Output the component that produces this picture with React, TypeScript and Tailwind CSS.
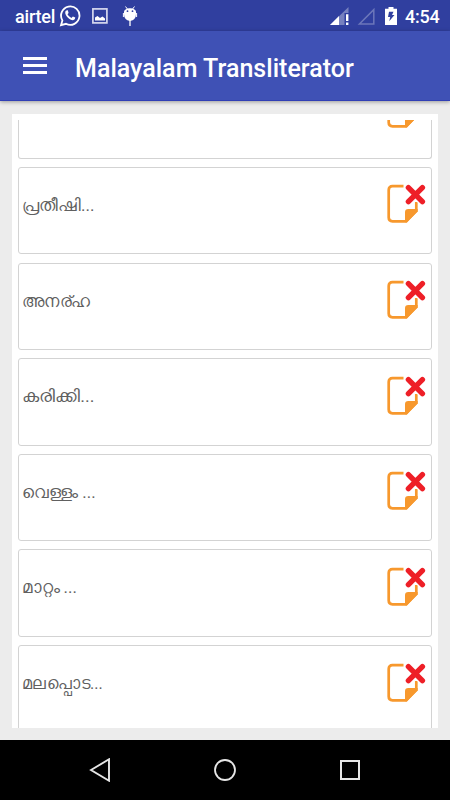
const entries = [
  { text: 'പ്രതീഷി...', fit: '' },
  { text: 'അനര്ഹ', fit: 'scale-x-[0.97]' },
  { text: 'കരിക്കി...', fit: 'scale-x-[1.06]' },
  { text: 'വെള്ളം ...', fit: 'scale-x-[0.985]' },
  { text: 'മാറ്റം ...', fit: 'scale-x-[0.985]' },
  { text: 'മലപ്പൊട...', fit: 'scale-x-[0.945]' },
];

function DeleteNoteIcon() {
  return (
    <svg className="h-10 w-10 shrink-0" viewBox="0 0 40 40" fill="none">
      <path d="M17.5 2.2H6.5Q2.7 2.2 2.7 6V33.6Q2.7 37.4 6.5 37.4H20L30.3 27V18" stroke="#f7982d" strokeWidth="2.7" strokeLinejoin="round" />
      <path d="M19 38V28.2Q19 24.9 22.3 24.9H31.6V27.2L20.8 38.7Z" fill="#f7982d" />
      <path d="M22.4 3.6L36.4 17.6M36.4 3.6L22.4 17.6" stroke="#fff" strokeWidth="8" strokeLinecap="round" />
      <path d="M22.4 3.6L36.4 17.6M36.4 3.6L22.4 17.6" stroke="#ee1f27" strokeWidth="5.4" strokeLinecap="round" />
    </svg>
  );
}

function StatusBar() {
  return (
    <div className="flex h-[31px] shrink-0 items-center bg-[#303f9f] pl-[15px] pr-[10px] text-white">
      <span className="mt-[2px] w-[40px] whitespace-nowrap text-[18px] font-medium leading-none tracking-[-0.2px]">airtel</span>
      <svg className="ml-[4px] h-[24px] w-[22px]" viewBox="0 0 22 24" fill="none">
        <path d="M2 21.2L3.4 16.4A9.2 9.2 0 1 1 7 19.8Z" stroke="white" strokeWidth="1.8" />
        <path d="M8 6.2Q6 6.5 6.2 9C6.8 12.5 10.5 16 14 16.2Q16.4 16 16.3 13.6L13.9 12.4L12.4 13.9Q9.6 12.8 8.5 10.3L9.6 9L8.8 6.3Z" fill="white" />
      </svg>
      <svg className="ml-[11px] h-4 w-4" viewBox="0 0 16 16" fill="none">
        <rect x=".9" y=".9" width="14" height="14" stroke="#d5d8ee" strokeWidth="1.7" />
        <path d="M3 12.5V9.5L5.5 8L8 10L10.5 8.5L13 10.5V12.5Z" fill="white" />
      </svg>
      <svg className="ml-[14px] h-5 w-4" viewBox="0 0 16 20">
        <path d="M3.5.5L5.4 3M12.5.5L10.6 3" stroke="white" strokeWidth="1" />
        <path d="M2 6C2.5 1 13.5 1 14 6V8Q14 14 8 15Q2 14 2 8Z" fill="white" />
        <path d="M1.4 7V11M14.6 7V11" stroke="white" strokeWidth="1" />
        <path d="M8 14V20" stroke="white" strokeWidth="1.3" />
        <circle cx="5.5" cy="5.2" r=".9" fill="#303f9f" /><circle cx="10.5" cy="5.2" r=".9" fill="#303f9f" />
      </svg>
      <svg className="ml-auto h-[18px] w-[19px]" viewBox="0 0 19 18">
        <path d="M0 18L18.5 0V6H14.5V18Z" fill="#7781bf" />
        <path d="M0 18L9 9V18Z" fill="white" />
        <path d="M16 7.2H18.4V14H16ZM16 15.4H18.4V18H16Z" fill="white" />
      </svg>
      <svg className="ml-[8px] h-[18px] w-[18px]" viewBox="0 0 18 18" fill="none">
        <path d="M2.4 17L16.8 2.6V17Z" stroke="#6c77ba" strokeWidth="1.5" />
      </svg>
      <svg className="ml-[10px] h-[18px] w-3" viewBox="0 0 12 18">
        <path d="M3.5 0H8.5V1.8H12V18H0V1.8H3.5Z" fill="white" />
        <path d="M4 4.8H8.5L7 8H9.5L4.2 14.2L5.2 10H3Z" fill="#303f9f" />
      </svg>
      <span className="ml-[8px] mt-[2px] w-[35px] whitespace-nowrap text-[18px] font-medium leading-none tracking-[-0.2px]">4:54</span>
    </div>
  );
}

export default function App() {
  return (
    <div className="flex h-[800px] w-[450px] flex-col overflow-hidden bg-[#ececec] font-['Roboto','Noto_Sans',sans-serif]">
      <StatusBar />
      <header className="flex h-[70px] shrink-0 items-center border-b border-[#303fb5] bg-[#3f51b5] pl-[23px] text-white shadow-[0_1px_4px_rgba(0,0,0,.35)]">
        <div className="flex w-6 flex-col gap-[4px]">
          <span className="h-[3px] bg-white" />
          <span className="h-[3px] bg-white" />
          <span className="h-[3px] bg-white" />
        </div>
        <h1 className="ml-[28px] mt-[5px] whitespace-nowrap text-[25px] font-medium leading-none tracking-[0.03px]">Malayalam Transliterator</h1>
      </header>
      <main className="mx-3 mb-[12.5px] mt-[12.5px] flex min-h-0 flex-1 flex-col bg-white px-[6px] pt-[6.5px]">
        <div className="flex min-h-0 flex-1 flex-col gap-[8.2px] overflow-hidden">
          <div className="flex h-[38.7px] shrink-0 items-end justify-end overflow-hidden rounded-b-[3px] border border-t-0 border-[#d3d3d3] pb-[29px] pr-[5px]">
            <DeleteNoteIcon />
          </div>
          {entries.map(({ text, fit }) => (
            <div key={text} className="flex h-[87.45px] shrink-0 items-start justify-between rounded-[3px] border border-[#d3d3d3] pl-[3px] pr-[5px] pt-[16.5px]">
              <span className={`mt-[8.5px] origin-left whitespace-nowrap text-[17px] leading-[24px] text-[#606060] ${fit}`}>{text}</span>
              <DeleteNoteIcon />
            </div>
          ))}
        </div>
      </main>
      <nav className="flex h-[60px] shrink-0 items-center justify-between bg-black pl-[88px] pr-[88px]">
        <svg className="h-6 w-6" viewBox="0 0 24 24" fill="none"><path d="M3 12L21 1.3V22.7Z" stroke="#e6e6e6" strokeWidth="1.9" /></svg>
        <svg className="h-6 w-6" viewBox="0 0 24 24" fill="none"><circle cx="12" cy="12" r="10" stroke="#e6e6e6" strokeWidth="1.8" /></svg>
        <svg className="h-6 w-6" viewBox="0 0 24 24" fill="none"><rect x="3" y="3" width="18" height="18" stroke="#e6e6e6" strokeWidth="2" /></svg>
      </nav>
    </div>
  );
}
